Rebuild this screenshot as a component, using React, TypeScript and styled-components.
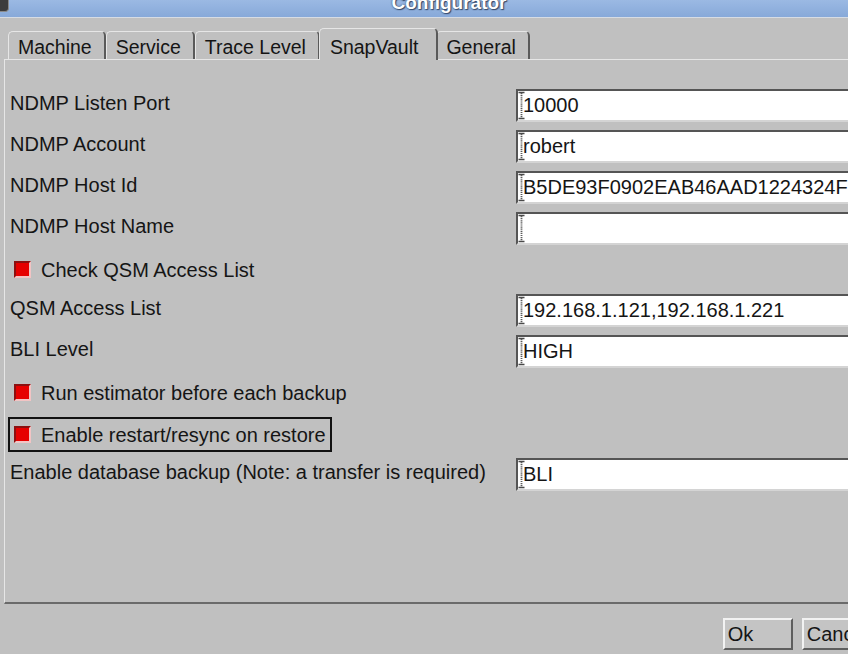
import React from 'react'
import styled, { createGlobalStyle } from 'styled-components'

const GlobalStyle = createGlobalStyle`
  html, body {
    margin: 0;
    padding: 0;
    overflow: hidden;
    background: #c0c0c0;
  }
  * {
    box-sizing: border-box;
  }
`

const Window = styled.div`
  width: 898px;
  height: 654px;
  display: flex;
  flex-direction: column;
  background: #c0c0c0;
  font-family: 'Liberation Sans', Arial, sans-serif;
  color: #151515;
`

const TitleBar = styled.div`
  height: 18px;
  flex: none;
  display: grid;
  grid-template-columns: 1fr auto 1fr;
  grid-template-rows: 17px;
  align-items: start;
  overflow: hidden;
  background: linear-gradient(to bottom, #9bb9e3, #87a9d9);
  border-bottom: 1px solid #d6dce4;
`

const WindowButton = styled.div`
  justify-self: start;
  width: 9px;
  height: 12px;
  background: #3c3c3c;
  border: 1px solid #8a8a8a;
  border-left: none;
  border-top: none;
  border-radius: 0 0 4px 0;
`

// the window is taller than the screen: only the bottom of the caption shows
const Title = styled.span`
  font-weight: bold;
  font-size: 19px;
  line-height: 22px;
  margin-top: -8px;
  color: #ffffff;
  text-shadow: 0 0 2px #2c3e5c, 1px 1px 1px #3a4d6e;
`

const TabBar = styled.div`
  flex: none;
  display: flex;
  align-items: flex-end;
  margin-top: 10px;
  padding-left: 8px;
  height: 31px;
`

const Tab = styled.div<{ $active?: boolean }>`
  position: relative;
  z-index: ${(p) => (p.$active ? 2 : 1)};
  font-size: 19.5px;
  line-height: 22px;
  white-space: nowrap;
  background: #c0c0c0;
  border-top: 1px solid #e6e6e6;
  border-left: 1px solid #e6e6e6;
  border-right: 2px solid #5a5a5a;
  border-radius: 5px 5px 0 0;
  padding: ${(p) => (p.$active ? '7px 18px 2px 10px' : '4px 12px 1px 9px')};
  margin: ${(p) => (p.$active ? '0 -2px -1px -1px' : '0')};
`

const Panel = styled.div`
  flex: 1;
  margin: 0 4px;
  border-top: 1px solid #e6e6e6;
  border-left: 1px solid #e6e6e6;
  border-bottom: 2px solid #6a6a6a;
  border-right: 2px solid #6a6a6a;
  padding: 29px 6px 0 5px;
  display: flex;
  flex-direction: column;
  gap: 8px;
`

const FieldRow = styled.div`
  display: grid;
  grid-template-columns: 506px 1fr;
  height: 33px;
`

const Label = styled.div`
  font-size: 20px;
  line-height: 24px;
  padding-top: 1.5px;
  white-space: nowrap;
`

const Field = styled.div`
  height: 33px;
  display: flex;
  align-items: center;
  background: #ffffff;
  border-top: 2px solid #555555;
  border-left: 2px solid #555555;
  border-bottom: 2px solid #d4d4d4;
  border-right: 2px solid #d4d4d4;
  font-size: 20px;
  line-height: 29px;
  white-space: nowrap;
  overflow: hidden;
`

const FieldText = styled.span`
  margin-left: -3px;
`

const CheckRow = styled.div`
  height: 33px;
  display: flex;
  align-items: flex-start;
`

const CheckItem = styled.div<{ $focused?: boolean }>`
  display: inline-flex;
  align-items: center;
  gap: 10px;
  height: ${(p) => (p.$focused ? '35px' : '33px')};
  margin-left: -2px;
  padding: 0 4px;
  border: 2px solid ${(p) => (p.$focused ? '#111111' : 'transparent')};
  font-size: 20px;
  line-height: 24px;
  white-space: nowrap;
`

const CheckBox = styled.span<{ $checked?: boolean }>`
  width: 17px;
  height: 17px;
  flex: none;
  background: ${(p) => (p.$checked ? '#e60000' : '#c0c0c0')};
  border: 2px solid;
  border-color: #8c1010 #f2c4c4 #f2c4c4 #8c1010;
`

const ButtonRow = styled.div`
  flex: none;
  height: 50px;
  display: flex;
  justify-content: flex-end;
  align-items: flex-start;
  gap: 9px;
  padding: 14px 21px 0 0;
`

const Button = styled.div`
  height: 32px;
  min-width: 70px;
  padding: 0 6px 0 3px;
  font-size: 20px;
  line-height: 28px;
  border-top: 2px solid #f2f2f2;
  border-left: 2px solid #f2f2f2;
  border-bottom: 2px solid #5e5e5e;
  border-right: 2px solid #5e5e5e;
  background: #c4c4c4;
`

const TextCursor = () => (
  <svg width="8" height="29" viewBox="0 0 8 29" style={{ flex: 'none' }}>
    <path d="M0.5 1.5h6M0.5 27.5h6" stroke="#4a4a4a" strokeWidth="1.3" />
    <path
      d="M3.5 2v25"
      stroke="#5a5a5a"
      strokeWidth="1.8"
      strokeDasharray="1.2 0.9"
    />
  </svg>
)

type Row =
  | { kind: 'field'; label: string; value: string }
  | { kind: 'check'; label: string; checked: boolean; focused?: boolean }

const rows: Row[] = [
  { kind: 'field', label: 'NDMP Listen Port', value: '10000' },
  { kind: 'field', label: 'NDMP Account', value: 'robert' },
  { kind: 'field', label: 'NDMP Host Id', value: 'B5DE93F0902EAB46AAD1224324F7A1C3' },
  { kind: 'field', label: 'NDMP Host Name', value: '' },
  { kind: 'check', label: 'Check QSM Access List', checked: true },
  { kind: 'field', label: 'QSM Access List', value: '192.168.1.121,192.168.1.221' },
  { kind: 'field', label: 'BLI Level', value: 'HIGH' },
  { kind: 'check', label: 'Run estimator before each backup', checked: true },
  { kind: 'check', label: 'Enable restart/resync on restore', checked: true, focused: true },
  { kind: 'field', label: 'Enable database backup (Note: a transfer is required)', value: 'BLI' }
]

const tabs = ['Machine', 'Service', 'Trace Level', 'SnapVault', 'General']

export default function App() {
  return (
    <>
      <GlobalStyle />
      <Window>
        <TitleBar>
          <WindowButton />
          <Title>Configurator</Title>
          <span />
        </TitleBar>

        <TabBar>
          {tabs.map((t) => (
            <Tab key={t} $active={t === 'SnapVault'}>
              {t}
            </Tab>
          ))}
        </TabBar>

        <Panel>
          {rows.map((r) =>
            r.kind === 'field' ? (
              <FieldRow key={r.label}>
                <Label>{r.label}</Label>
                <Field>
                  <TextCursor />
                  <FieldText>{r.value}</FieldText>
                </Field>
              </FieldRow>
            ) : (
              <CheckRow key={r.label}>
                <CheckItem $focused={r.focused}>
                  <CheckBox $checked={r.checked} />
                  {r.label}
                </CheckItem>
              </CheckRow>
            )
          )}
        </Panel>

        <ButtonRow>
          <Button>Ok</Button>
          <Button>Cancel</Button>
        </ButtonRow>
      </Window>
    </>
  )
}
